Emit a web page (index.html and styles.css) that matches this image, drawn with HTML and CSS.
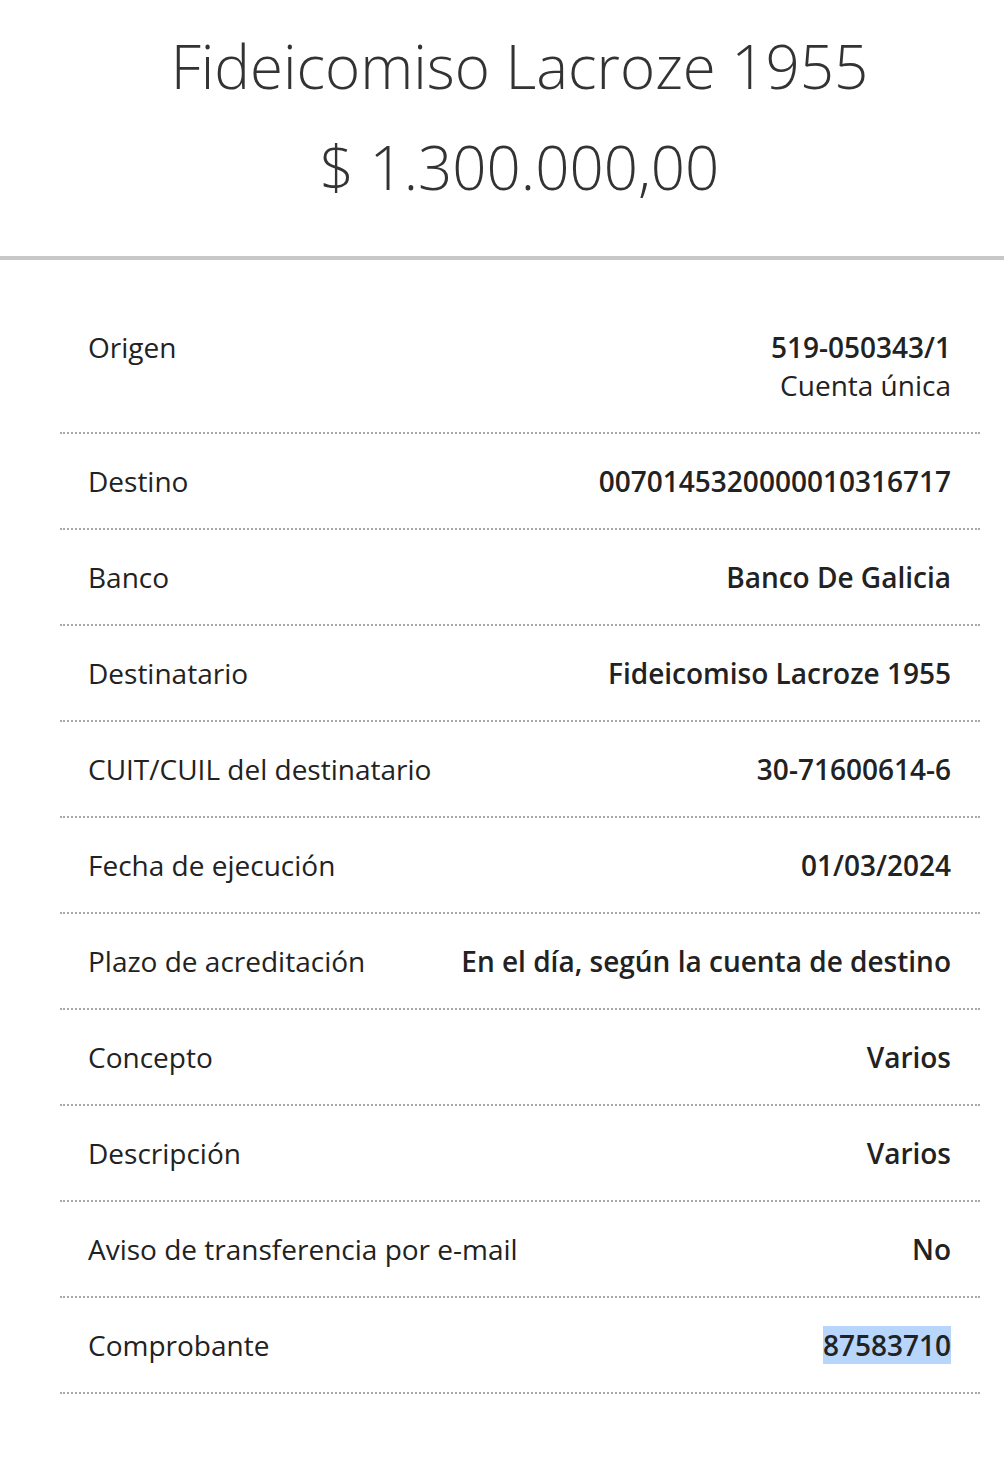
FILE: index.html
```html
<!DOCTYPE html>
<html lang="es">
<head>
<meta charset="utf-8">
<title>Comprobante</title>
<link rel="stylesheet" href="styles.css">
</head>
<body>
<header class="summary">
  <h1 class="summary-title">Fideicomiso Lacroze 1955</h1>
  <p class="summary-amount">$ 1.300.000,00</p>
</header>
<main class="details">
  <div class="row">
    <div class="label">Origen</div>
    <div class="value">519-050343/1<span class="sub">Cuenta única</span></div>
  </div>
  <div class="row">
    <div class="label">Destino</div>
    <div class="value">0070145320000010316717</div>
  </div>
  <div class="row">
    <div class="label">Banco</div>
    <div class="value">Banco De Galicia</div>
  </div>
  <div class="row">
    <div class="label">Destinatario</div>
    <div class="value">Fideicomiso Lacroze 1955</div>
  </div>
  <div class="row">
    <div class="label">CUIT/CUIL del destinatario</div>
    <div class="value">30-71600614-6</div>
  </div>
  <div class="row">
    <div class="label">Fecha de ejecución</div>
    <div class="value">01/03/2024</div>
  </div>
  <div class="row">
    <div class="label">Plazo de acreditación</div>
    <div class="value">En el día, según la cuenta de destino</div>
  </div>
  <div class="row">
    <div class="label">Concepto</div>
    <div class="value">Varios</div>
  </div>
  <div class="row">
    <div class="label">Descripción</div>
    <div class="value">Varios</div>
  </div>
  <div class="row">
    <div class="label">Aviso de transferencia por e-mail</div>
    <div class="value">No</div>
  </div>
  <div class="row">
    <div class="label">Comprobante</div>
    <div class="value"><span class="selected">87583710</span></div>
  </div>
</main>
</body>
</html>
```
FILE: styles.css
```css
html, body {
  margin: 0;
  padding: 0;
  background: #ffffff;
}
body {
  font-family: "Open Sans", "Liberation Sans", sans-serif;
  color: #222222;
}
.summary {
  border-bottom: 4px solid #c8c8c8;
  text-align: center;
  padding: 26px 0 49px 35px;
}
.summary-title,
.summary-amount {
  margin: 0;
  font-weight: 300;
  font-size: 60px;
  line-height: 80px;
  color: #333333;
}
.summary-amount {
  margin-top: 21px;
}
.details {
  margin: 40px 24px 0 60px;
}
.row {
  display: flex;
  justify-content: space-between;
  align-items: flex-start;
  gap: 24px;
  padding: 29px 29px 29px 28px;
  border-bottom: 2px dotted #a8a8a8;
  font-size: 28px;
  line-height: 36px;
}
.label {
  font-weight: 400;
  color: #222222;
}
.value {
  font-weight: 600;
  text-align: right;
  color: #222222;
}
.sub {
  display: block;
  margin-top: 2px;
  font-weight: 400;
}
.selected {
  background: #b8d5fb;
}
```
